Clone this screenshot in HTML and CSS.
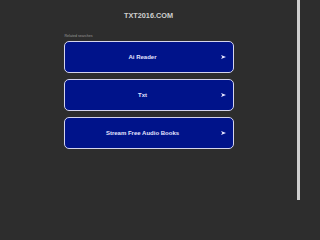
FILE: index.html
```html
<!DOCTYPE html>
<html>
<head>
<meta charset="utf-8">
<link rel="stylesheet" href="styles.css">
</head>
<body>
<div class="page">
  <main class="main">
    <header class="header">
      <h1 class="title">TXT2016.COM</h1>
    </header>
    <section class="related">
      <div class="label">Related searches</div>
      <a class="btn" href="#"><span class="btn-text">Ai Reader</span><svg class="arrow" viewBox="0 0 10 8"><polygon points="0,0 10,4 0,8 2.5,4"/></svg></a>
      <a class="btn" href="#"><span class="btn-text">Txt</span><svg class="arrow" viewBox="0 0 10 8"><polygon points="0,0 10,4 0,8 2.5,4"/></svg></a>
      <a class="btn" href="#"><span class="btn-text">Stream Free Audio Books</span><svg class="arrow" viewBox="0 0 10 8"><polygon points="0,0 10,4 0,8 2.5,4"/></svg></a>
    </section>
  </main>
  <div class="scrollbar"></div>
</div>
</body>
</html>
```
FILE: styles.css
```css
html, body {
  margin: 0;
  padding: 0;
  height: 100%;
  background: #2d2d2d;
  font-family: "Liberation Sans", Arial, sans-serif;
}
.page {
  display: flex;
  width: 300px;
  height: 200px;
  overflow: hidden;
}
.main {
  flex: 1;
  display: flex;
  flex-direction: column;
  align-items: center;
}
.scrollbar {
  width: 3px;
  background: #cfcfcf;
}
.header {
  height: 29px;
  display: flex;
  align-items: center;
  justify-content: center;
}
.title {
  margin: 0;
  padding-top: 1px;
  font-size: 7.3px;
  font-weight: bold;
  color: #cfcfcf;
}
.related {
  width: 170px;
  display: flex;
  flex-direction: column;
  padding-top: 5px;
}
.label {
  font-size: 3.6px;
  color: #9a9a9a;
  height: 7px;
  line-height: 4px;
  padding-left: 1px;
}
.btn {
  box-sizing: border-box;
  height: 32px;
  margin-bottom: 6px;
  padding-right: 7px;
  border: 1px solid #d4d4ec;
  border-radius: 5px;
  background: #00138a;
  display: flex;
  align-items: center;
  text-decoration: none;
}
.btn-text {
  flex: 1;
  text-align: center;
  font-size: 6px;
  font-weight: bold;
  color: #e4e4ff;
}
.arrow {
  width: 5px;
  height: 4px;
  fill: #e8e8ff;
}
```
